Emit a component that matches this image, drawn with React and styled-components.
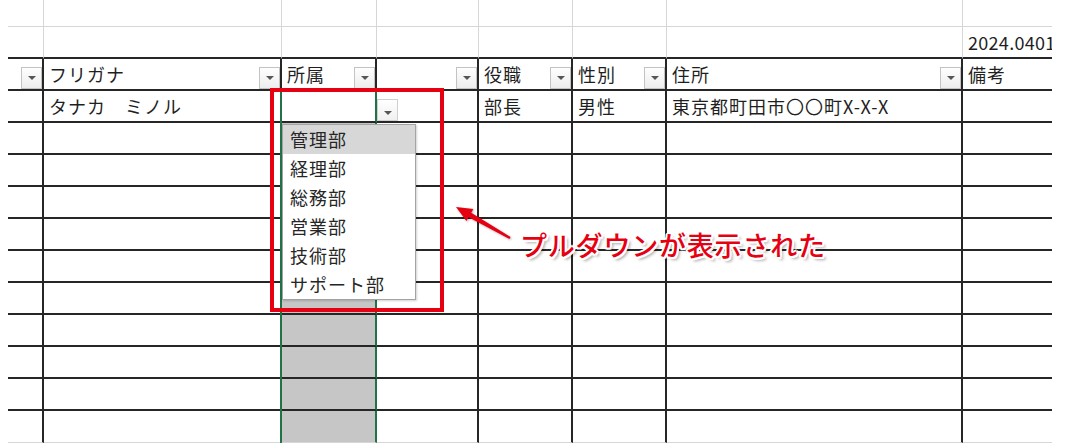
import React from "react";
import styled, { createGlobalStyle } from "styled-components";

const GlobalStyle = createGlobalStyle`
  body {
    margin: 0;
    background: #ffffff;
    font-family: "Noto Sans CJK JP", "Noto Sans", sans-serif;
  }
`;

const GREEN = "#217346";
const RED = "#e50012";
const DARK = "#262626";
const LIGHT = "#d6d6d6";

const columns = [36, 238, 95, 102, 94, 94, 296, 89];

const headers = ["", "フリガナ", "所属", "", "役職", "性別", "住所", "備考"];
const firstRow = ["", "タナカ　ミノル", "", "", "部長", "男性", "東京都町田市〇〇町X-X-X", ""];
const departments = ["管理部", "経理部", "総務部", "営業部", "技術部", "サポート部"];
const DATA_ROWS = 11;
const SELECTED_COL = 2;

const Page = styled.div`
  position: relative;
  width: 1073px;
  height: 444px;
  padding-left: 8px;
  box-sizing: border-box;
  overflow: hidden;
  color: #1f1f1f;
  font-size: 18px;
  letter-spacing: 1px;
`;

const Sheet = styled.div`
  display: grid;
  grid-template-columns: ${columns.map((w) => `${w}px`).join(" ")};
  grid-template-rows: 27px repeat(13, 32px);
  width: 1044px;
`;

const lineFor = (kind) => {
  if (kind === "none") return "none";
  if (kind === "light") return `1px solid ${LIGHT}`;
  if (kind === "green") return `2px solid ${GREEN}`;
  return `2px solid ${DARK}`;
};

const Cell = styled.div`
  box-sizing: border-box;
  display: flex;
  align-items: center;
  justify-content: space-between;
  min-width: 0;
  overflow: hidden;
  white-space: nowrap;
  padding-left: 5px;
  line-height: 1;
  border-right: ${(p) => lineFor(p.$v)};
  border-bottom: ${(p) => lineFor(p.$h)};
  background: ${(p) => (p.$fill ? "#c6c6c6" : "transparent")};
  box-shadow: ${(p) => (p.$selected ? `-2px 0 0 ${GREEN}` : "none")};
`;

const DateText = styled.span`
  letter-spacing: 0.3px;
`;

const FilterButton = styled.span`
  flex: none;
  align-self: flex-end;
  width: 21px;
  height: 22px;
  box-sizing: border-box;
  border: 1px solid #c3c3c3;
  background: linear-gradient(#fefefe, #ededed);
  display: flex;
  align-items: center;
  justify-content: center;

  &::after {
    content: "";
    border-left: 4px solid transparent;
    border-right: 4px solid transparent;
    border-top: 4px solid #565656;
  }
`;

const DropButton = styled(FilterButton)`
  position: absolute;
  left: 377px;
  top: 99px;
  background: linear-gradient(#ffffff, #f0f0f0);
  border-color: #cfcfcf;

  &::after {
    margin-top: 6px;
  }
`;

const List = styled.ul`
  position: absolute;
  left: 282px;
  top: 124px;
  width: 134px;
  margin: 0;
  padding: 0;
  list-style: none;
  box-sizing: border-box;
  background: #ffffff;
  border: 1px solid #a3a3a3;
  box-shadow: 1px 1px 2px rgba(0, 0, 0, 0.18);
`;

const Option = styled.li`
  height: 29px;
  line-height: 29px;
  padding-left: 7px;
  font-size: 18px;
  color: #262626;
  background: ${(p) => (p.$active ? "#d7d7d7" : "transparent")};
`;

const Frame = styled.div`
  position: absolute;
  left: 270px;
  top: 88px;
  width: 174px;
  height: 224px;
  box-sizing: border-box;
  border: 4px solid ${RED};
`;

const Callout = styled.div`
  position: absolute;
  left: 450px;
  top: 200px;
  display: flex;
  align-items: flex-start;
  gap: 6px;
`;

const Arrow = styled.svg`
  flex: none;
  width: 64px;
  height: 42px;
  filter: drop-shadow(1px 1px 1px rgba(0, 0, 0, 0.3));
`;

const Note = styled.div`
  margin-top: 27px;
  font-size: 27px;
  line-height: 36px;
  font-weight: 500;
  letter-spacing: 0.8px;
  color: ${RED};
  white-space: nowrap;
  text-shadow: 2px 0 0 #fff, -2px 0 0 #fff, 0 2px 0 #fff, 0 -2px 0 #fff,
    1.5px 1.5px 0 #fff, -1.5px -1.5px 0 #fff, 1.5px -1.5px 0 #fff,
    -1.5px 1.5px 0 #fff, 3px 3px 3px rgba(0, 0, 0, 0.35);
`;

const lastCol = columns.length - 1;

const App = () => {
  const cells = [];

  // two plain sheet rows above the table
  for (let r = 0; r < 2; r++) {
    columns.forEach((_, c) => {
      cells.push(
        <Cell
          key={`top-${r}-${c}`}
          $v={c === lastCol ? "none" : "light"}
          $h={r === 0 ? "light" : "dark"}
        >
          {r === 1 && c === lastCol && <DateText>2024.0401</DateText>}
        </Cell>
      );
    });
  }

  headers.forEach((label, c) => {
    cells.push(
      <Cell key={`head-${c}`} $v={c === lastCol ? "none" : "dark"} $h="dark">
        <span>{label}</span>
        {c !== lastCol && <FilterButton />}
      </Cell>
    );
  });

  for (let r = 0; r < DATA_ROWS; r++) {
    columns.forEach((_, c) => {
      const selected = c === SELECTED_COL;
      let v = c === lastCol ? "none" : "dark";
      if (selected) v = "green";
      cells.push(
        <Cell
          key={`row-${r}-${c}`}
          $v={v}
          $h={r === DATA_ROWS - 1 ? "light" : "dark"}
          $selected={selected}
          $fill={selected && r > 0}
        >
          {r === 0 ? firstRow[c] : ""}
        </Cell>
      );
    });
  }

  return (
    <>
      <GlobalStyle />
      <Page>
        <Sheet>{cells}</Sheet>

        <DropButton />
        <List>
          {departments.map((name, i) => (
            <Option key={name} $active={i === 0}>
              {name}
            </Option>
          ))}
        </List>
        <Frame />

        <Callout>
          <Arrow viewBox="450 200 64 42">
            <polygon
              fill={RED}
              points="456,207 473.4,208.9 471.2,212.8 510.6,237 509.4,239 468.6,217.2 466.4,221.1"
            />
          </Arrow>
          <Note>プルダウンが表示された</Note>
        </Callout>
      </Page>
    </>
  );
};

export default App;
